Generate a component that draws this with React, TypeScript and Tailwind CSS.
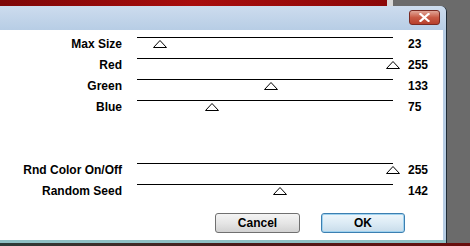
import React from 'react';

const TRACK_W = 256;

interface SliderRowProps {
  label: string;
  value: number;
}

function Thumb({ value }: { value: number }) {
  const left = Math.round((value / 255) * TRACK_W) - 7;
  return (
    <svg
      className="absolute top-[2px]"
      style={{ left }}
      width="14"
      height="8"
      viewBox="0 0 14 8"
    >
      <polygon points="7,0.5 13.5,7.5 0.5,7.5" fill="white" stroke="black" strokeWidth="1" />
    </svg>
  );
}

function SliderRow({ label, value }: SliderRowProps) {
  return (
    <div className="flex h-[21px] items-start">
      <div className="w-[122px] text-right leading-[14px]">{label}</div>
      <div className="relative ml-[15px] h-[21px] w-[256px] border-t border-black">
        <Thumb value={value} />
      </div>
      <div className="ml-[15px] leading-[14px]">{value}</div>
    </div>
  );
}

export default function App() {
  return (
    <div className="flex h-[246px] w-[470px] flex-col overflow-hidden bg-[#6b6b6b] font-['Liberation_Sans',Arial,sans-serif] text-[12px] font-bold text-black">
      <div className="flex h-[6px]">
        <div className="w-[387px] bg-gradient-to-r from-[#7e0707] via-[#a80d0d] to-[#8c0808]" />
        <div className="w-[6px] bg-[#d8d8d8]" />
      </div>
      <div className="flex h-[237px]">
        <div className="flex w-[447px] flex-col rounded-tr-[6px] border-r border-[#1e2a35] bg-[#b6cce4]">
          <div className="flex h-[24px] items-start justify-end rounded-tr-[6px] bg-gradient-to-b from-[#cddcee] to-[#b7cde5] pr-[6px] pt-[4px]">
            <div className="flex h-[15px] w-[31px] items-center justify-center rounded-[3px] border border-[#7a2a22] bg-gradient-to-b from-[#e0a597] via-[#c85a45] to-[#b8402c]">
              <svg width="11" height="9" viewBox="0 0 11 9">
                <path d="M1.5 1 L9.5 8 M9.5 1 L1.5 8" stroke="white" strokeWidth="2.2" strokeLinecap="square" />
              </svg>
            </div>
          </div>
          <div className="mr-[3px] flex h-[210px] flex-col bg-white pt-[7px]">
            <SliderRow label="Max Size" value={23} />
            <SliderRow label="Red" value={255} />
            <SliderRow label="Green" value={133} />
            <SliderRow label="Blue" value={75} />
            <div className="h-[42px]" />
            <SliderRow label="Rnd Color On/Off" value={255} />
            <SliderRow label="Random Seed" value={142} />
            <div className="mt-[8px] flex gap-[21px] pl-[215px]">
              <button className="flex h-[20px] w-[85px] items-center justify-center rounded-[3px] border border-[#707070] bg-gradient-to-b from-[#f4f4f4] via-[#e6e6e6] to-[#d2d2d2] font-bold">
                Cancel
              </button>
              <button className="flex h-[20px] w-[84px] items-center justify-center rounded-[3px] border border-[#3c7fb1] bg-gradient-to-b from-[#eef6fb] via-[#dcebf5] to-[#c8dcea] font-bold shadow-[inset_0_0_0_1px_#9fd2ef]">
                OK
              </button>
            </div>
          </div>
          <div className="h-[3px] bg-[#8fc0c4]" />
        </div>
      </div>
      <div className="h-[3px] bg-gradient-to-r from-[#2b3b38] via-[#4a1a1a] to-[#6a0c0c]" />
    </div>
  );
}
